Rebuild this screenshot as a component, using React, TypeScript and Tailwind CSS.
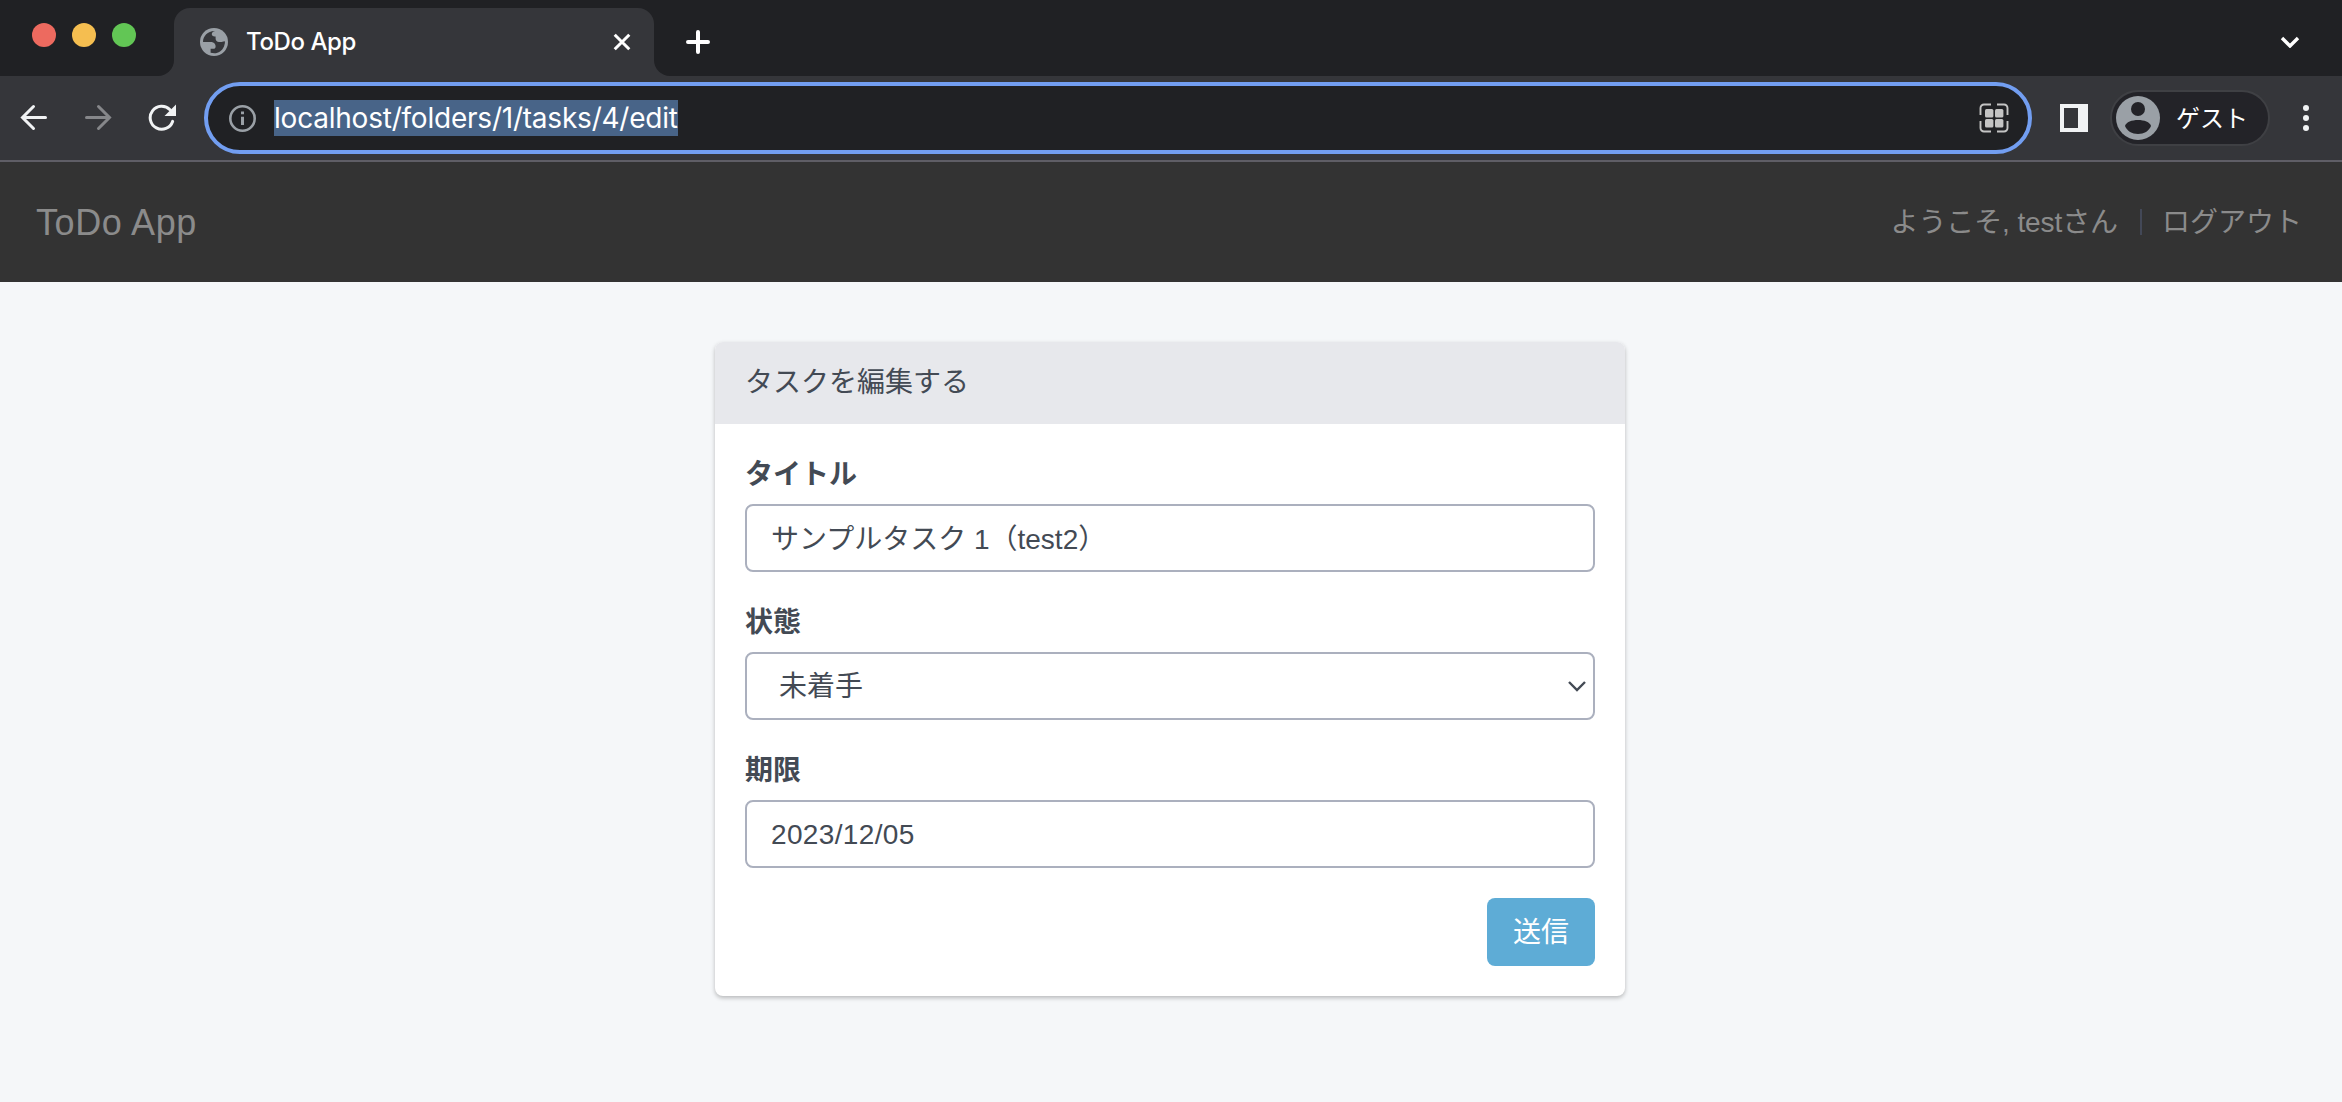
import React from "react";

const sans = "font-['Liberation_Sans','Noto_Sans_CJK_JP',sans-serif]";
const ui = "font-['Inter','Noto_Sans_CJK_JP',sans-serif]";

function TabStrip() {
  return (
    <div className="flex h-[76px] bg-[#35363a]">
      <div className="flex w-[174px] gap-4 rounded-br-[16px] bg-[#202124] pt-[23px] pl-8">
        <span className="size-6 rounded-full bg-[#ed6a5f]" />
        <span className="size-6 rounded-full bg-[#f5be50]" />
        <span className="size-6 rounded-full bg-[#62c655]" />
      </div>
      <div className="w-[480px] bg-[#202124] pt-2">
        <div className="flex h-full items-center rounded-t-[16px] bg-[#35363a] pr-5 pl-[26px]">
          <svg className="mb-px size-7" viewBox="0 0 28 28">
            <circle cx="14" cy="14" r="14" fill="#9aa0a6" />
            <path
              d="M15 3.1 C13 3.6 11.8 4.8 11.8 6.2 C11.8 7.6 13 8.4 14.6 8.4 L15.6 8.4 L15.6 10.6 C15.6 12.6 17 14 19 14 L21 14 C22 14 22.6 13.4 24.8 13.2 C25 13.6 25 14.4 24.8 15.4 L24 18.4 C22 22.8 18.6 25 14.4 25.2 L10.6 24.8 L10.6 20.8 L13.2 20.8 C14.8 20.8 15.6 19.8 15.6 18.4 C15.6 16.2 13.8 14 11 14 L3 14 C3 8 8 2.8 15 3.1 Z"
              fill="#35363a"
            />
          </svg>
          <span className={`${ui} ml-[18px] flex-1 text-[24px] leading-8 font-medium tracking-[-0.4px] text-white`}>ToDo App</span>
          <svg className="size-6" viewBox="0 0 24 24" stroke="#fff" strokeWidth="3">
            <path d="M4.7 4.7 19.3 19.3M19.3 4.7 4.7 19.3" />
          </svg>
        </div>
      </div>
      <div className="flex flex-1 items-center justify-between rounded-bl-[16px] bg-[#202124] pt-2 pr-[42px] pl-8">
        <svg className="size-6" viewBox="0 0 24 24" stroke="#fff" strokeWidth="4" strokeLinecap="round">
          <path d="M12 2V22M2 12H22" />
        </svg>
        <svg className="h-3 w-5" viewBox="0 0 20 12" stroke="#fff" strokeWidth="3.4" fill="none">
          <path d="M2 2 10 10 18 2" />
        </svg>
      </div>
    </div>
  );
}

function Toolbar() {
  return (
    <div className="flex h-[86px] items-center border-b-2 border-[#5f5e66] bg-[#35363a]">
      <svg className="ml-5 size-7" viewBox="0 0 28 28" stroke="#f1f3f4" strokeWidth="3" strokeLinecap="round" fill="none">
        <path d="M25.5 13.5H3M13.5 2.5 2.5 13.5 13.5 24.5" />
      </svg>
      <svg className="ml-9 size-7" viewBox="0 0 28 28" stroke="#86878a" strokeWidth="3" strokeLinecap="round" fill="none">
        <path d="M2.5 13.5H25M14.5 2.5 25.5 13.5 14.5 24.5" />
      </svg>
      <svg className="ml-9 size-7" viewBox="0 0 28 28" fill="none">
        <path d="M24.6 17.4A11.5 11.5 0 1 1 22 5.8" stroke="#f1f3f4" strokeWidth="3" strokeLinecap="round" />
        <path d="M28 0.5V12H16.5Z" fill="#f1f3f4" />
      </svg>
      <div className="ml-[28px] flex h-[72px] w-[1828px] items-center rounded-full border-4 border-[#729ef1] bg-[#202124] pr-[19px] pl-[20px]">
        <svg className="size-7" viewBox="0 0 28 28" fill="none">
          <circle cx="14.5" cy="14.5" r="12.2" stroke="#9aa0a6" strokeWidth="2.6" />
          <path d="M13 7.5H16V10.3H13ZM13 12.7H16V21H13Z" fill="#9aa0a6" />
        </svg>
        <span className={`${ui} ml-[18px] h-9 bg-[#486488] text-[28px] leading-[37px] tracking-[-0.22px] text-white`}>localhost/folders/1/tasks/4/edit</span>
        <svg className="ml-auto size-[30px]" viewBox="0 0 30 30" fill="none">
          <path d="M1.5 12V5A3.5 3.5 0 0 1 5 1.5H12M18 1.5H25A3.5 3.5 0 0 1 28.5 5V12M28.5 18V25A3.5 3.5 0 0 1 25 28.5H18M12 28.5H5A3.5 3.5 0 0 1 1.5 25V18" stroke="#c4c4c4" strokeWidth="1.9" />
          <g fill="#c4c4c4">
            <rect x="6" y="6" width="8.4" height="8.4" rx="1.5" />
            <rect x="16" y="6" width="8.4" height="8.4" rx="1.5" />
            <rect x="6" y="16" width="8.4" height="8.4" rx="1.5" />
            <rect x="16" y="16" width="8.4" height="8.4" rx="1.5" />
          </g>
        </svg>
      </div>
      <svg className="ml-7 size-7" viewBox="0 0 28 28">
        <path d="M0 0H28V28H0ZM4 4V24H18V4Z" fill="#f1f3f4" fillRule="evenodd" />
      </svg>
      <div className="ml-[22px] flex h-14 w-[160px] items-center rounded-full border-2 border-[#3f4044] bg-[#232328] pl-1">
        <svg className="size-11" viewBox="0 0 44 44">
          <circle cx="22" cy="22" r="22" fill="#9aa0a6" />
          <circle cx="22" cy="13" r="7" fill="#232328" />
          <path d="M9 30C10 26 16 24 22 24S34 26 35 30C33 35 28 38 22 38S11 35 9 30Z" fill="#232328" />
        </svg>
        <span className={`${ui} ml-[16px] pt-px text-[24px] leading-8 text-white`}>ゲスト</span>
      </div>
      <svg className="ml-8 h-[26px] w-2" viewBox="0 0 8 26" fill="#f1f3f4">
        <circle cx="4" cy="3" r="3" />
        <circle cx="4" cy="13" r="3" />
        <circle cx="4" cy="23" r="3" />
      </svg>
    </div>
  );
}

function Field({ label, children }: { label: string; children: React.ReactNode }) {
  return (
    <div className="mb-[30px]">
      <label className="mb-[9px] block h-[41px] pt-px text-[28px] leading-10 font-bold">{label}</label>
      {children}
    </div>
  );
}

const control = "flex h-[68px] w-full items-center rounded-lg border-2 border-[#abb0be] bg-white px-6 text-[28px]";

export default function App() {
  return (
    <div className={`${sans} min-h-[1102px] w-[2342px] bg-[#f5f7f9] text-[#434a54]`}>
      <TabStrip />
      <Toolbar />
      <nav className="flex h-[120px] items-center bg-[#333333] pr-10 pl-9 text-[28px] text-[#8b8b8b]">
        <a className="flex-1 pt-px text-[36px] tracking-[0.6px]">ToDo App</a>
        <span className="pt-px tracking-[-0.1px]">ようこそ, testさん</span>
        <span className="mr-5 ml-[22px] h-[26px] w-[2px] bg-[#434857]" />
        <a className="pt-px">ログアウト</a>
      </nav>
      <main className="flex justify-center pt-[60px] pr-[2px]">
        <section className="h-[654px] w-[910px] overflow-hidden rounded-lg bg-white shadow-[0_2px_4px_rgba(0,0,0,0.25)]">
          <h1 className="h-[82px] bg-[#e7e8ec] px-[30px] text-[28px] leading-[81px]">タスクを編集する</h1>
          <form className="px-[30px] pt-[30px]">
            <Field label="タイトル">
              <div className={`${control} pt-[3px]`}>サンプルタスク 1（test2）</div>
            </Field>
            <Field label="状態">
              <div className={`${control} justify-between`}>
                <span className="ml-2 pt-0.5">未着手</span>
                <svg className="-mr-[18px] h-3 w-5" viewBox="0 0 20 12" fill="none" stroke="#434a54" strokeWidth="2.4">
                  <path d="M2 2 10 10 18 2" />
                </svg>
              </div>
            </Field>
            <Field label="期限">
              <div className={`${control} pt-px tracking-[0.35px]`}>2023/12/05</div>
            </Field>
            <div className="flex justify-end">
              <button type="button" className="h-[68px] w-[108px] rounded-lg bg-[#5eacd6] pt-0.5 text-[28px] text-white">送信</button>
            </div>
          </form>
        </section>
      </main>
    </div>
  );
}
